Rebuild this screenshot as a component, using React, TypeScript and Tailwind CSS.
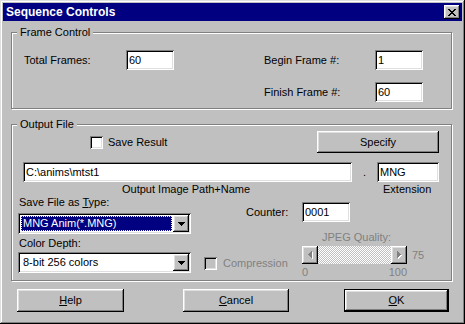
import React from 'react';

const raised =
  'shadow-[inset_-1px_-1px_#000,inset_1px_1px_#fff,inset_-2px_-2px_#808080,inset_2px_2px_#dfdfdf]';
const sunken =
  'shadow-[inset_1px_1px_#808080,inset_-1px_-1px_#fff,inset_2px_2px_#000,inset_-2px_-2px_#dfdfdf]';

function Field({ value, className = '' }: { value: string; className?: string }) {
  return (
    <div className={`flex h-[20px] items-center bg-white pl-[3px] ${sunken} ${className}`}>
      <span className="leading-[13px]">{value}</span>
    </div>
  );
}

function Check({ disabled = false, className = '' }: { disabled?: boolean; className?: string }) {
  return (
    <div
      className={`h-[13px] w-[13px] shrink-0 ${sunken} ${disabled ? 'bg-[#c0c0c0]' : 'bg-white'} ${className}`}
    />
  );
}

function Button({
  children,
  isDefault = false,
  className = '',
}: {
  children: React.ReactNode;
  isDefault?: boolean;
  className?: string;
}) {
  const face = (
    <div className={`flex h-full w-full items-center justify-center bg-[#c0c0c0] ${raised}`}>
      <span className="leading-[13px]">{children}</span>
    </div>
  );
  return isDefault ? (
    <div className={`border border-black ${className}`}>{face}</div>
  ) : (
    <div className={className}>{face}</div>
  );
}

function DownArrow() {
  return (
    <svg width="7" height="4" viewBox="0 0 7 4" className="block">
      <path d="M0 0h7v1h-1v1h-1v1h-1v1h-1v-1h-1v-1h-1v-1h-1z" fill="#000" />
    </svg>
  );
}

function Select({ value, selected = false }: { value: string; selected?: boolean }) {
  return (
    <div className={`flex h-[21px] w-[173px] items-stretch bg-white p-[2px] ${sunken}`}>
      <div className="flex flex-1 py-[1px] pl-[1px] pr-[1px]">
        {selected ? (
          <div className="flex flex-1 items-center border border-dotted border-[#ffff80] bg-[#000080] pl-[1px] text-white">
            <span className="leading-[13px]">{value}</span>
          </div>
        ) : (
          <div className="flex flex-1 items-center pl-[2px]">
            <span className="leading-[13px]">{value}</span>
          </div>
        )}
      </div>
      <div className={`flex w-[16px] items-center justify-center bg-[#c0c0c0] ${raised}`}>
        <DownArrow />
      </div>
    </div>
  );
}

function Group({
  title,
  className = '',
  children,
}: {
  title: string;
  className?: string;
  children?: React.ReactNode;
}) {
  return (
    <div className={`relative border border-[#808080] shadow-[inset_1px_1px_#fff,1px_1px_#fff] ${className}`}>
      <span className="absolute -top-[7px] left-[5px] bg-[#c0c0c0] px-[3px] leading-[13px]">{title}</span>
      {children}
    </div>
  );
}

function ScrollArrow({ dir }: { dir: 'left' | 'right' }) {
  const d =
    dir === 'left'
      ? 'M0 3h1v-1h1v-1h1v-1h1v7h-1v-1h-1v-1h-1v-1h-1z'
      : 'M4 3h-1v-1h-1v-1h-1v-1h-1v7h1v-1h1v-1h1v-1h1z';
  return (
    <div className={`flex h-full w-[16px] items-center justify-center bg-[#c0c0c0] ${raised}`}>
      <svg width="5" height="8" viewBox="0 0 5 8" className="block">
        <path d={d} fill="#fff" transform="translate(1 1)" />
        <path d={d} fill="#808080" />
      </svg>
    </div>
  );
}

function CloseGlyph() {
  return (
    <svg width="8" height="7" viewBox="0 0 8 7" className="block">
      <path
        d="M0 0h2v1h1v1h2v-1h1v-1h2v1h-1v1h-1v1h-1v1h1v1h1v1h1v1h-2v-1h-1v-1h-2v1h-1v1h-2v-1h1v-1h1v-1h1v-1h-1v-1h-1v-1h-1z"
        fill="#000"
      />
    </svg>
  );
}

export default function App() {
  return (
    <div
      className={`flex h-[324px] w-[465px] flex-col bg-[#c0c0c0] p-[3px] font-['Liberation_Sans',Arial,sans-serif] text-[11px] text-black shadow-[inset_-1px_-1px_#000,inset_1px_1px_#dfdfdf,inset_-2px_-2px_#808080,inset_2px_2px_#fff]`}
    >
      {/* Title bar */}
      <div className="flex h-[18px] items-center bg-[#000080] pl-[3px] pr-[2px]">
        <span className="text-[12px] font-bold leading-[14px] text-white">Sequence Controls</span>
        <div className={`ml-auto flex h-[14px] w-[16px] items-center justify-center bg-[#c0c0c0] ${raised}`}>
          <CloseGlyph />
        </div>
      </div>

      {/* Frame Control */}
      <Group title="Frame Control" className="ml-[8px] mt-[11px] h-[77px] w-[441px]">
        <div className="grid grid-cols-[102px_48px_90px_111px_48px] items-center gap-y-[12px] pl-[12px] pt-[17px]">
          <span className="leading-[13px]">Total Frames:</span>
          <Field value="60" />
          <div />
          <span className="leading-[13px]">Begin Frame #:</span>
          <Field value="1" />
          <span className="col-start-4 leading-[13px]">Finish Frame #:</span>
          <Field value="60" />
        </div>
      </Group>

      {/* Output File */}
      <Group title="Output File" className="ml-[8px] mt-[15px] h-[157px] w-[441px]">
        <div className="mt-[6px] flex h-[22px] items-center">
          <Check className="ml-[78px]" />
          <span className="ml-[5px] leading-[13px]">Save Result</span>
          <Button className="ml-auto mr-[12px] h-[22px] w-[122px]">Specify</Button>
        </div>

        <div className="mt-[9px] flex items-center">
          <Field value={'C:\\anims\\mtst1'} className="ml-[11px] w-[329px]" />
          <span className="w-[25px] text-center leading-[13px]">.</span>
          <Field value="MNG" className="w-[62px]" />
        </div>

        <div className="mt-[1px] flex leading-[13px]">
          <span className="ml-[110px] w-[261px]">Output Image Path+Name</span>
          <span>Extension</span>
        </div>

        <div className="flex">
          {/* left column */}
          <div className="ml-[6px] flex w-[173px] flex-col">
            <span className="pl-[1px] leading-[13px]">
              Save File as <u className="underline-offset-1">T</u>ype:
            </span>
            <div className="mt-[4px]">
              <Select value="MNG Anim(*.MNG)" selected />
            </div>
            <span className="mt-[3px] pl-[1px] leading-[13px]">Color Depth:</span>
            <div className="mt-[2px]">
              <Select value="8-bit 256 colors" />
            </div>
          </div>

          {/* right area */}
          <div className="flex flex-1 flex-col">
            <div className="mt-[6px] flex items-center">
              <span className="ml-[55px] w-[56px] leading-[13px]">Counter:</span>
              <Field value="0001" className="w-[48px]" />
            </div>
            <span className="ml-[131px] mt-[9px] leading-[13px] text-[#808080]">JPEG Quality:</span>
            <div className="mt-[2px] flex items-start">
              <div className="ml-[13px] mt-[11px] flex w-[98px] items-center">
                <Check disabled />
                <span className="ml-[6px] leading-[13px] text-[#808080]">Compression</span>
              </div>
              <div className="flex flex-col">
                <div className="flex items-center">
                  <div className="flex h-[18px] w-[105px]">
                    <ScrollArrow dir="left" />
                    <div className="flex-1 bg-[image:repeating-conic-gradient(#c0c0c0_0_25%,#fff_0_50%)] bg-[length:2px_2px]" />
                    <ScrollArrow dir="right" />
                  </div>
                  <span className="ml-[5px] leading-[13px] text-[#808080]">75</span>
                </div>
                <div className="mt-[2px] flex w-[105px] justify-between leading-[13px] text-[#808080]">
                  <span>0</span>
                  <span>100</span>
                </div>
              </div>
            </div>
          </div>
        </div>
      </Group>

      {/* Buttons */}
      <div className="mt-[8px] flex">
        <Button className="ml-[14px] h-[23px] w-[107px]">
          <u className="underline-offset-1">H</u>elp
        </Button>
        <Button className="ml-[59px] h-[23px] w-[106px]">
          <u className="underline-offset-1">C</u>ancel
        </Button>
        <Button isDefault className="ml-[55px] h-[23px] w-[105px]">
          <u className="underline-offset-1">O</u>K
        </Button>
      </div>
    </div>
  );
}
